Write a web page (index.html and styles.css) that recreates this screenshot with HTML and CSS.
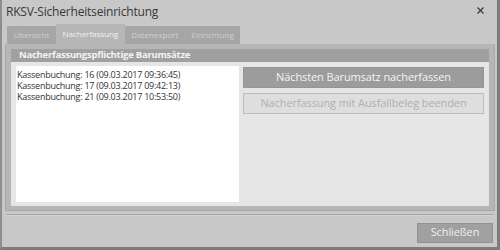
FILE: index.html
```html
<!DOCTYPE html>
<html lang="de">
<head>
<meta charset="utf-8">
<title>RKSV-Sicherheitseinrichtung</title>
<link rel="stylesheet" href="styles.css">
</head>
<body>
<div class="window">
  <div class="titlebar">
    <span class="title">RKSV-Sicherheitseinrichtung</span>
    <span class="close" aria-label="Schließen">
      <svg width="7" height="7" viewBox="0 0 7 7"><path d="M0.5 0.5 L6.5 6.5 M6.5 0.5 L0.5 6.5" stroke="#3c3c3c" stroke-width="1.3" fill="none"/></svg>
    </span>
  </div>
  <div class="tabs">
    <div class="tab">Übersicht</div>
    <div class="tab active">Nacherfassung</div>
    <div class="tab">Datenexport</div>
    <div class="tab">Einrichtung</div>
  </div>
  <div class="panel">
    <div class="group">
      <div class="group-header">Nacherfassungspflichtige Barumsätze</div>
      <div class="group-body">
        <div class="list">
          <div class="item">Kassenbuchung: 16 (09.03.2017 09:36:45)</div>
          <div class="item">Kassenbuchung: 17 (09.03.2017 09:42:13)</div>
          <div class="item">Kassenbuchung: 21 (09.03.2017 10:53:50)</div>
        </div>
        <div class="actions">
          <div class="btn primary">Nächsten Barumsatz nacherfassen</div>
          <div class="btn disabled">Nacherfassung mit Ausfallbeleg beenden</div>
        </div>
      </div>
    </div>
  </div>
  <div class="separator"></div>
  <div class="footer">
    <div class="btn close-btn">Schließen</div>
  </div>
</div>
</body>
</html>
```
FILE: styles.css
```css
* { box-sizing: border-box; }
html, body { margin: 0; padding: 0; }
body {
  width: 500px;
  height: 250px;
  overflow: hidden;
  font-family: "Open Sans", "Noto Sans", sans-serif;
  background: #c8c8c8;
}
.window {
  width: 500px;
  height: 250px;
  background: #c8c8c8;
  border-left: 2px solid #8e8e8e;
  border-right: 3px solid #7c7c7c;
  border-bottom: 3px solid #7c7c7c;
  display: flex;
  flex-direction: column;
}
.titlebar {
  height: 24px;
  display: flex;
  align-items: center;
  justify-content: space-between;
  padding: 0 13px 0 4px;
}
.title {
  font-size: 12px;
  letter-spacing: -0.2px;
  line-height: 24px;
  color: #383838;
}
.close {
  display: flex;
  width: 7px;
  height: 7px;
  margin-top: -3px;
}
.tabs {
  height: 20px;
  display: flex;
  align-items: flex-end;
  padding-left: 5px;
}
.tab {
  height: 18px;
  padding: 0 6.5px;
  background: #a6a6a6;
  color: #d0d0d0;
  font-size: 8px;
  line-height: 18px;
  white-space: nowrap;
}
.tab.active {
  height: 20px;
  line-height: 20px;
  padding-bottom: 1px;
  line-height: 19px;
  background: #b6b6b6;
  color: #f2f2f2;
}
.panel {
  height: 167px;
  margin: 0 2px 0 3px;
  border: 1px solid #a9a9a9;
  border-top: none;
  background: #b6b6b6;
  padding: 5px 5px 4px 5px;
  display: flex;
}
.group {
  flex: 1;
  display: flex;
  flex-direction: column;
}
.group-header {
  height: 13px;
  background: #a0a0a0;
  color: #f4f4f4;
  font-weight: 700;
  font-size: 9.5px;
  letter-spacing: -0.25px;
  line-height: 12px;
  padding-left: 8px;
  white-space: nowrap;
}
.group-body {
  flex: 1;
  background: #e6e6e6;
  padding: 4px 5px;
  display: flex;
  gap: 4px;
}
.list {
  width: 223px;
  background: #ffffff;
  padding: 3px 0 0 1px;
}
.item {
  font-size: 9px;
  letter-spacing: -0.25px;
  line-height: 11px;
  color: #333333;
  white-space: nowrap;
}
.actions {
  flex: 1;
  padding-top: 1px;
  display: flex;
  flex-direction: column;
  gap: 5px;
}
.btn {
  height: 21px;
  border: 1px solid #959595;
  font-size: 11px;
  letter-spacing: -0.1px;
  line-height: 17px;
  padding-bottom: 2px;
  text-align: center;
  white-space: nowrap;
}
.btn.primary {
  background: #9c9c9c;
  color: #f4f4f4;
}
.btn.disabled {
  background: #dedede;
  border: 1px solid #bdbdbd;
  color: #b0b0b0;
}
.separator {
  height: 2px;
  margin: 3px 3px 0 4px;
  border-top: 1px solid #a8a8a8;
  border-bottom: 1px solid #d2d2d2;
}
.footer {
  flex: 1;
  display: flex;
  justify-content: flex-end;
  align-items: flex-start;
  padding: 7px 4px 0 0;
}
.btn.close-btn {
  width: 76px;
  height: 20px;
  line-height: 16px;
  background: #a0a0a0;
  border: 1px solid #929292;
  color: #eeeeee;
}
```
